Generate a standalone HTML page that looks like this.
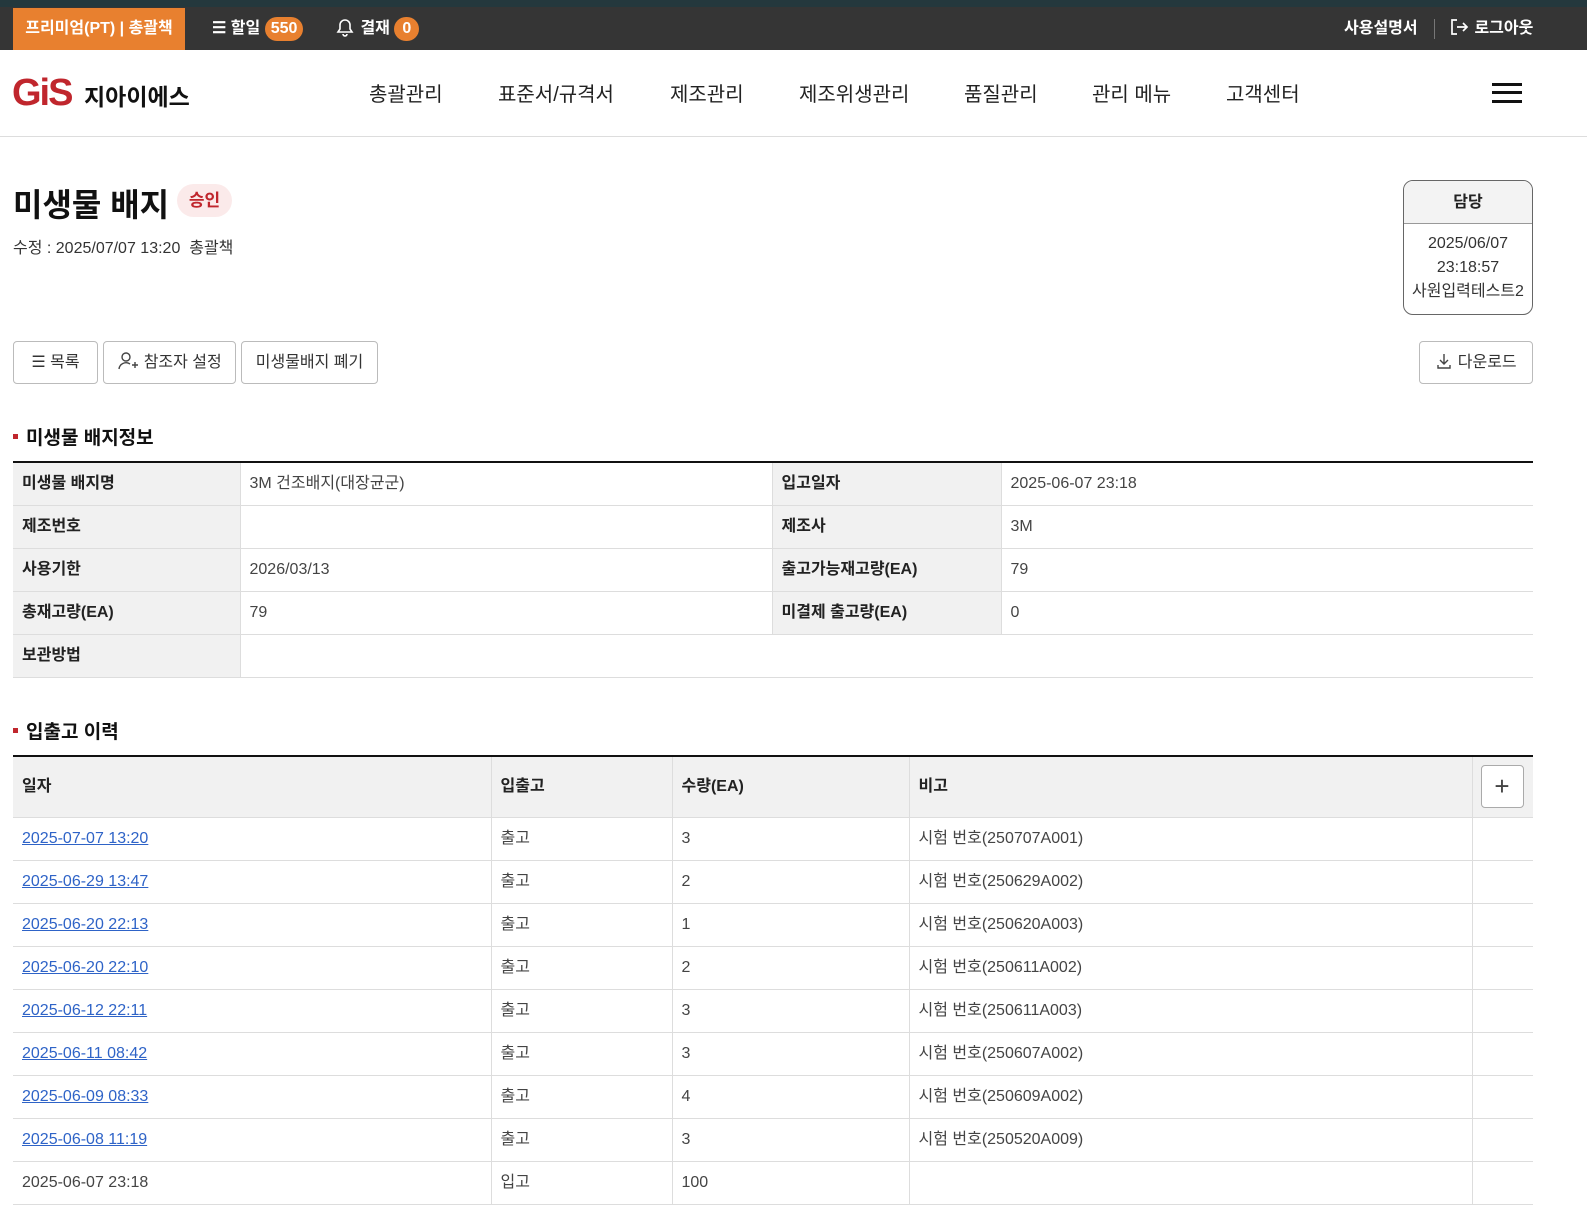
<!DOCTYPE html>
<html><head><meta charset="utf-8">
<style>
*{box-sizing:border-box;margin:0;padding:0}
html,body{width:1587px;height:1215px;overflow:hidden}
body{background:#fff;font-family:"Liberation Sans","Noto Sans CJK KR",sans-serif;color:#222;position:relative}
.top{position:absolute;left:0;top:0;right:0;height:50px;background:#353535;border-top:7px solid #24383d}
.abs{position:absolute}
.badge{display:inline-block;background:#e8802f;color:#fff;border-radius:12px;padding:0 6px;font-weight:bold;height:24px;line-height:24px}
.nav{position:absolute;top:78px;font-size:20px;color:#222}
.btn{position:absolute;top:341px;height:43px;border:1px solid #bbb;border-radius:4px;font-size:16px;line-height:41px;text-align:center;color:#333}
.sec{position:absolute;left:13px;font-size:19px;font-weight:bold;color:#111}
.sec:before{content:"";display:inline-block;width:5px;height:5px;background:#c0262d;margin-right:8px;vertical-align:middle;position:relative;top:-2px}
table{position:absolute;left:13px;width:1520px;border-collapse:collapse;font-size:16px;table-layout:fixed}
td{border-bottom:1px solid #ddd;padding:0 9px;color:#444;line-height:20px;vertical-align:middle}
.info{top:461px;border-top:2px solid #111}
.info td{height:43px}
.info td.l{background:#f1f1f1;font-weight:bold;color:#222}
.info td.v{border-left:1px solid #ddd}
.hist{top:755px;border-top:2px solid #111}
.hist td{height:43px;border-left:1px solid #ddd}
.hist td:first-child{border-left:none}
.hist tr.h td{height:61px;background:#f1f1f1;font-weight:bold;color:#222}
a{color:#2e63c7;text-decoration:underline}
</style></head><body>
<div class="top">
 <div class="abs" style="left:13px;top:1px;width:172px;height:42px;background:#e8802f;color:#fff;font-weight:bold;font-size:16px;line-height:42px;text-align:center">프리미엄(PT) | 총괄책</div>
 <div class="abs" style="left:212px;top:10px;color:#fff;font-weight:bold;font-size:16px;line-height:24px">☰ 할일 <span class="badge">550</span></div>
 <div class="abs" style="left:334px;top:10px;color:#fff;font-weight:bold;font-size:16px;line-height:24px">
  <svg width="22" height="20" viewBox="0 0 22 20" style="vertical-align:-4px"><path d="M4 15h14l-2-3V8a5 5 0 0 0-10 0v4z M9 17a2 2 0 0 0 4 0" fill="none" stroke="#fff" stroke-width="1.6"/></svg> 결재 <span class="badge" style="padding:0 8px">0</span></div>
 <div class="abs" style="left:1344px;top:10px;color:#fff;font-weight:bold;font-size:16px;line-height:24px">사용설명서</div>
 <div class="abs" style="left:1434px;top:12px;width:1px;height:20px;background:#777"></div>
 <div class="abs" style="left:1450px;top:10px;color:#fff;font-weight:bold;font-size:16px;line-height:24px">
  <svg width="20" height="18" viewBox="0 0 20 18" style="vertical-align:-3px"><path d="M7 2H2v14h5M7 9h10M13 5l4 4-4 4" fill="none" stroke="#fff" stroke-width="1.7"/></svg> 로그아웃</div>
</div>
<div class="abs" style="left:12px;top:74px;font-size:38px;font-weight:900;color:#c0262d;letter-spacing:-2px;line-height:38px">GiS</div>
<div class="abs" style="left:84px;top:78px;font-size:23px;font-weight:bold;color:#111">지아이에스</div>
<div class="nav" style="left:369px">총괄관리</div>
<div class="nav" style="left:498px">표준서/규격서</div>
<div class="nav" style="left:670px">제조관리</div>
<div class="nav" style="left:799px">제조위생관리</div>
<div class="nav" style="left:964px">품질관리</div>
<div class="nav" style="left:1092px">관리 메뉴</div>
<div class="nav" style="left:1226px">고객센터</div>
<div class="abs" style="left:1492px;top:83px;width:30px;height:20px;border-top:3px solid #111;border-bottom:3px solid #111"><div style="margin-top:5px;height:3px;background:#111"></div></div>
<div class="abs" style="left:0;top:136px;right:0;height:1px;background:#ddd"></div>

<div class="abs" style="left:13px;top:180px;font-size:32px;font-weight:bold;color:#111">미생물 배지</div>
<div class="abs" style="left:177px;top:184px;width:55px;height:33px;border-radius:17px;background:#fbeaea;color:#c0262d;font-size:17px;font-weight:bold;line-height:33px;text-align:center">승인</div>
<div class="abs" style="left:13px;top:234px;font-size:16px;color:#333">수정 : 2025/07/07 13:20&nbsp; 총괄책</div>

<div class="abs" style="left:1403px;top:180px;width:130px;height:135px;border:1px solid #666;border-radius:10px;overflow:hidden;text-align:center">
 <div style="height:43px;background:#f3f3f3;border-bottom:1px solid #999;font-weight:bold;font-size:16px;line-height:43px;color:#222">담당</div>
 <div style="font-size:16px;line-height:24px;padding-top:8px;color:#333">2025/06/07<br>23:18:57<br>사원입력테스트2</div>
</div>

<div class="btn" style="left:13px;width:85px">☰ 목록</div>
<div class="btn" style="left:103px;width:133px"><svg width="22" height="20" viewBox="0 0 22 20" style="vertical-align:-4px"><circle cx="9" cy="6" r="4" fill="none" stroke="#444" stroke-width="1.4"/><path d="M2 18a7 7 0 0 1 11-5M15 14h6M18 11v6" fill="none" stroke="#444" stroke-width="1.4"/></svg> 참조자 설정</div>
<div class="btn" style="left:241px;width:137px">미생물배지 폐기</div>
<div class="btn" style="left:1419px;width:114px"><svg width="18" height="18" viewBox="0 0 18 18" style="vertical-align:-3px"><path d="M9 2v10M5 8l4 4 4-4M3 13v3h12v-3" fill="none" stroke="#444" stroke-width="1.4"/></svg> 다운로드</div>

<div class="sec" style="top:423px">미생물 배지정보</div>
<table class="info">
<colgroup><col style="width:227px"><col style="width:532px"><col style="width:229px"><col></colgroup>
<tr><td class="l">미생물 배지명</td><td class="v">3M 건조배지(대장균군)</td><td class="l v">입고일자</td><td class="v">2025-06-07 23:18</td></tr>
<tr><td class="l">제조번호</td><td class="v"></td><td class="l v">제조사</td><td class="v">3M</td></tr>
<tr><td class="l">사용기한</td><td class="v">2026/03/13</td><td class="l v">출고가능재고량(EA)</td><td class="v">79</td></tr>
<tr><td class="l">총재고량(EA)</td><td class="v">79</td><td class="l v">미결제 출고량(EA)</td><td class="v">0</td></tr>
<tr><td class="l">보관방법</td><td class="v" colspan="3"></td></tr>
</table>

<div class="sec" style="top:717px">입출고 이력</div>
<table class="hist">
<colgroup><col style="width:478px"><col style="width:181px"><col style="width:237px"><col style="width:563px"><col></colgroup>
<tr class="h"><td>일자</td><td>입출고</td><td>수량(EA)</td><td>비고</td><td style="padding:0 8px"><div style="width:43px;height:43px;border:1px solid #aaa;border-radius:4px;background:#fff;text-align:center;line-height:40px;font-size:26px;font-weight:normal;color:#444">+</div></td></tr>
<tr><td><a>2025-07-07 13:20</a></td><td>출고</td><td>3</td><td>시험 번호(250707A001)</td><td></td></tr>
<tr><td><a>2025-06-29 13:47</a></td><td>출고</td><td>2</td><td>시험 번호(250629A002)</td><td></td></tr>
<tr><td><a>2025-06-20 22:13</a></td><td>출고</td><td>1</td><td>시험 번호(250620A003)</td><td></td></tr>
<tr><td><a>2025-06-20 22:10</a></td><td>출고</td><td>2</td><td>시험 번호(250611A002)</td><td></td></tr>
<tr><td><a>2025-06-12 22:11</a></td><td>출고</td><td>3</td><td>시험 번호(250611A003)</td><td></td></tr>
<tr><td><a>2025-06-11 08:42</a></td><td>출고</td><td>3</td><td>시험 번호(250607A002)</td><td></td></tr>
<tr><td><a>2025-06-09 08:33</a></td><td>출고</td><td>4</td><td>시험 번호(250609A002)</td><td></td></tr>
<tr><td><a>2025-06-08 11:19</a></td><td>출고</td><td>3</td><td>시험 번호(250520A009)</td><td></td></tr>
<tr><td>2025-06-07 23:18</td><td>입고</td><td>100</td><td></td><td></td></tr>
</table>
</body></html>
